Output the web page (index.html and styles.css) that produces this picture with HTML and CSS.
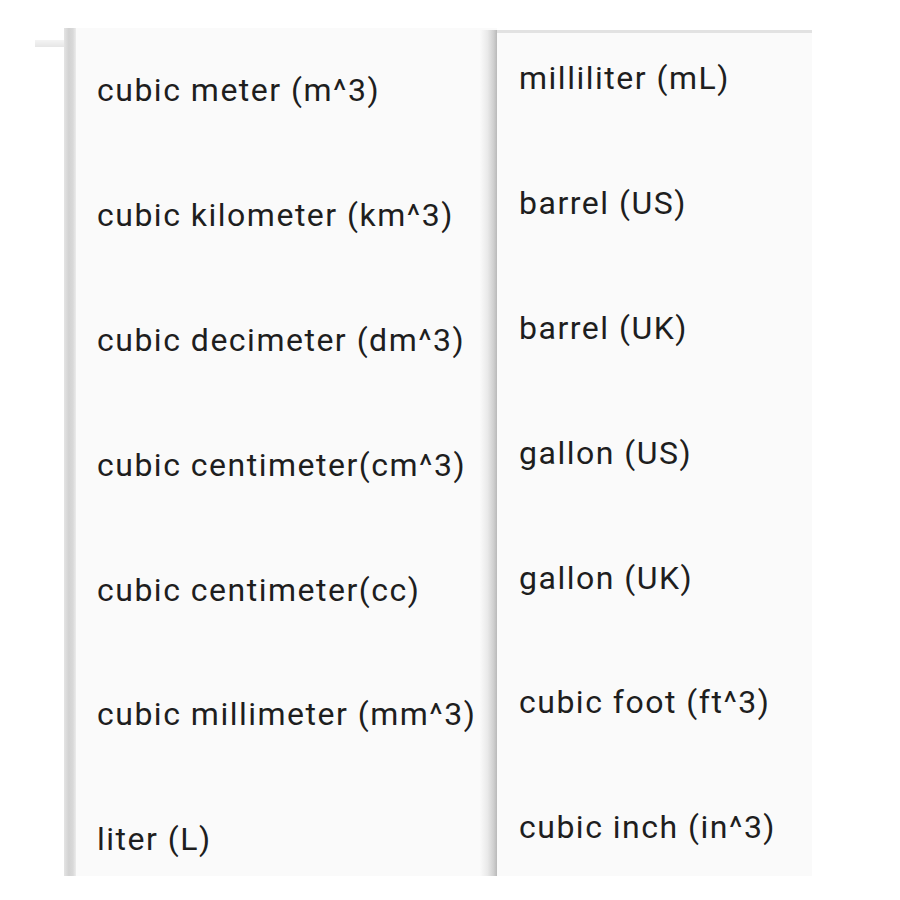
FILE: index.html
```html
<!DOCTYPE html>
<html>
<head>
<meta charset="utf-8">
<link rel="stylesheet" href="styles.css">
</head>
<body>
<div class="stage">
  <div class="tab"></div>
  <div class="menu menu-left">
    <div class="edge edge-left"></div>
    <ul class="list">
      <li class="item">cubic meter (m^3)</li>
      <li class="item">cubic kilometer (km^3)</li>
      <li class="item">cubic decimeter (dm^3)</li>
      <li class="item">cubic centimeter(cm^3)</li>
      <li class="item">cubic centimeter(cc)</li>
      <li class="item">cubic millimeter (mm^3)</li>
      <li class="item">liter (L)</li>
    </ul>
  </div>
  <div class="menu menu-right">
    <div class="edge edge-right"></div>
    <ul class="list list-scrolled">
      <li class="item">milliliter (mL)</li>
      <li class="item">barrel (US)</li>
      <li class="item">barrel (UK)</li>
      <li class="item">gallon (US)</li>
      <li class="item">gallon (UK)</li>
      <li class="item">cubic foot (ft^3)</li>
      <li class="item">cubic inch (in^3)</li>
    </ul>
  </div>
</div>
</body>
</html>
```
FILE: styles.css
```css
html, body {
  margin: 0;
  padding: 0;
  background: #ffffff;
}

.stage {
  display: grid;
  grid-template-columns: 29px 12px 404px 17px 315px;
  grid-template-rows: 848px;
  padding: 28px 0 0 35px;
}

.tab {
  grid-column: 1;
  grid-row: 1;
  align-self: start;
  margin-top: 12px;
  height: 7px;
  background: linear-gradient(#f4f4f4, #e6e6e6);
}

.menu {
  display: flex;
  overflow: hidden;
  background: #fafafa;
}

.menu-left {
  grid-column: 2 / 5;
  grid-row: 1;
}

.menu-right {
  grid-column: 4 / 6;
  grid-row: 1;
  margin-top: 2px;
  background: transparent;
  z-index: 1;
}

.edge {
  flex: none;
}

.edge-left {
  width: 12px;
  background: linear-gradient(to right, #e4e4e4 0%, #d2d2d2 40%, #d9d9d9 75%, #ececec 100%);
}

.edge-right {
  width: 17px;
  background: linear-gradient(to right, rgba(250,250,250,0) 0%, #e9e9e9 45%, #cfcfcf 80%, #b9b9b9 100%);
}

.list {
  flex: 1;
  list-style: none;
  margin: 0;
  padding: 0 0 0 21px;
  background: #fafafa;
  font-family: Roboto, "Liberation Sans", sans-serif;
  font-size: 32px;
  letter-spacing: 1.5px;
  color: #1e1e1e;
}

.menu-right .list {
  border-top: 3px solid #e2e2e2;
  padding-left: 22px;
}

.list-scrolled .item:first-child {
  margin-top: -17px;
}

.item {
  height: 124.8px;
  display: flex;
  align-items: center;
  white-space: nowrap;
}
```
